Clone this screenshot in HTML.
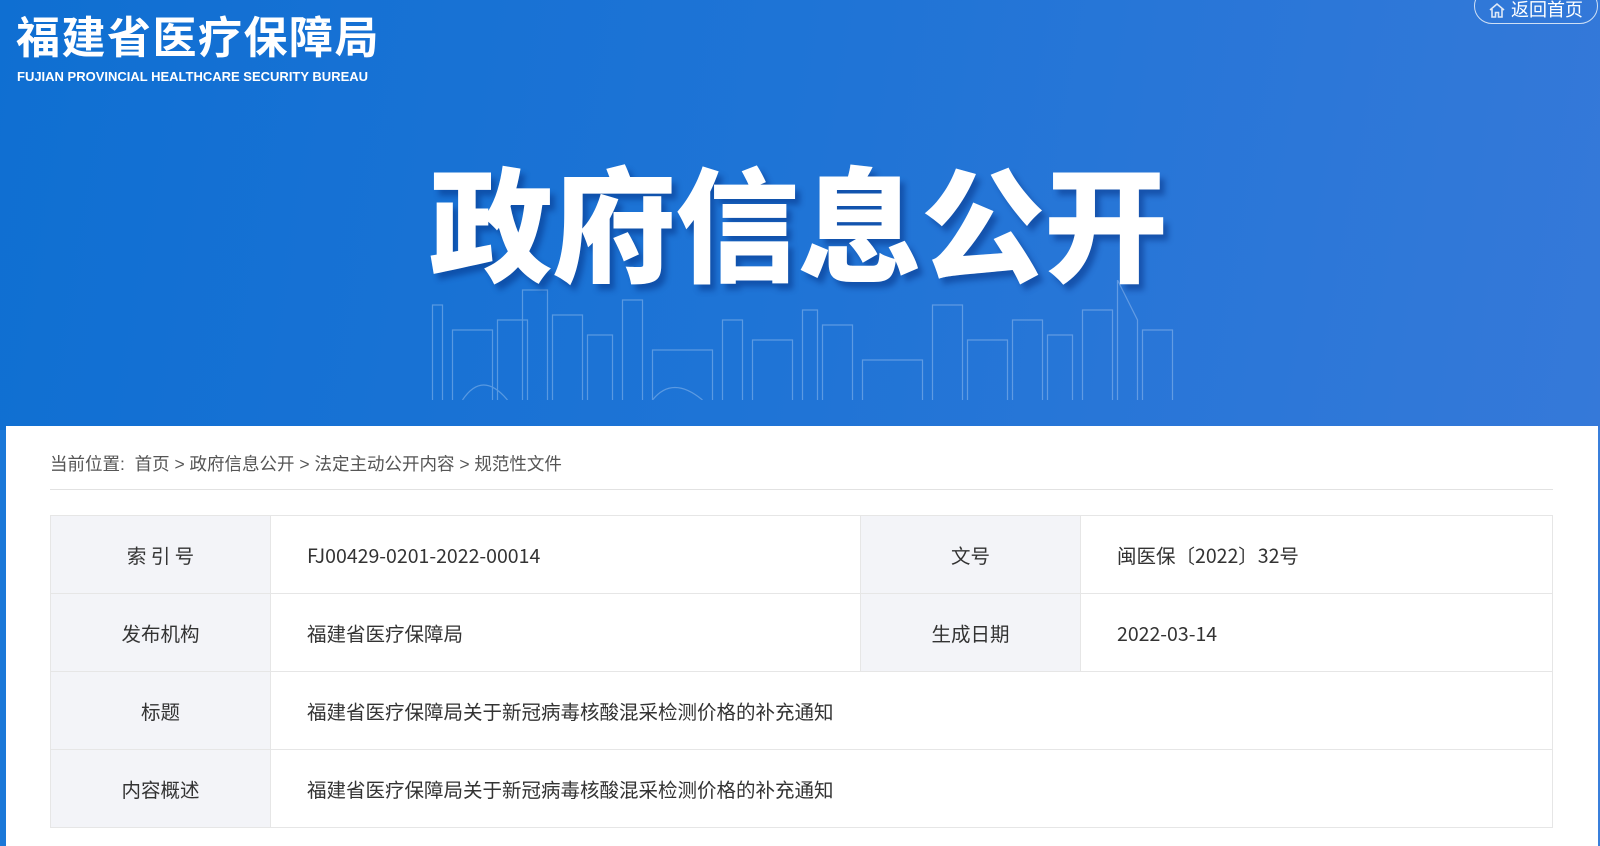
<!DOCTYPE html>
<html><head><meta charset="utf-8"><style>
*{margin:0;padding:0;box-sizing:border-box}
body{width:1600px;height:827px;overflow:hidden;font-family:"Liberation Sans","Noto Sans CJK SC",sans-serif;background:linear-gradient(90deg,#1b78d8,#3a7fdb);position:relative}
.hdr{position:absolute;left:0;top:0;width:1600px;height:430px;background:linear-gradient(100deg,#0f6fd2 0%,#1f74d6 50%,#3579d9 100%)}
.logo{position:absolute;left:16px;top:2px;color:#fff;font-size:44px;font-weight:bold;letter-spacing:1.5px;white-space:nowrap}
.en{position:absolute;left:17px;top:69px;color:#fff;font-size:13px;font-weight:bold;white-space:nowrap}
.home{position:absolute;left:1474px;top:-12px;width:124px;height:36px;border:1.5px solid #cfe0f5;border-radius:18px;color:#fff;font-size:18px;padding:11px 0 0 36px;line-height:20px;white-space:nowrap}
.home svg{position:absolute;left:13px;top:13px}
.title{position:absolute;left:429px;top:128px;color:#fff;font-size:124px;font-weight:900;letter-spacing:-1px;white-space:nowrap;text-shadow:5px 6px 6px rgba(0,40,120,.45);font-family:"Noto Sans CJK SC",sans-serif}
.city{position:absolute;left:415px;top:280px;width:780px;height:120px;opacity:.3}
.panel{position:absolute;left:6px;top:426px;width:1592px;height:420px;background:#fff}
.bc{position:absolute;left:44px;top:25px;font-size:17.5px;color:#555}
.line{position:absolute;left:44px;top:63px;width:1503px;height:1px;background:#e2e2e2}
table{position:absolute;left:44px;top:89px;width:1503px;border-collapse:collapse}
td{border:1px solid #e6e6e6;height:78px;font-size:19.5px;color:#333;font-family:"Noto Sans CJK SC",sans-serif}
td.k{background:#f3f4f8;text-align:center;width:220px}
td.v{padding-left:36px}
</style></head><body>
<div class="hdr">
<div class="logo">福建省医疗保障局</div>
<div class="en">FUJIAN PROVINCIAL HEALTHCARE SECURITY BUREAU</div>
<div class="home"><svg width="18" height="17" viewBox="0 0 18 17"><path d="M2 8 L9 2 L16 8 M4 7 V15 H7.5 V10.5 H10.5 V15 H14 V7" fill="none" stroke="#dfe9f7" stroke-width="1.6"/></svg>返回首页</div>
<svg class="city" viewBox="0 0 765 120"><g fill="none" stroke="#e8f2ff" stroke-width="1.2">
<path d="M10 120V25h10v95M30 120V50h40v70M75 120V40h30v80M100 120V10h25v110M130 120V35h30v85M165 120V55h25v65M200 120V20h20v100M230 120V70h60v50M300 120V40h20v80M330 120V60h40v60M380 120V30h15v90M400 120V45h30v75M440 120V80h60v40M510 120V25h30v95M545 120V60h40v60M590 120V40h30v80M625 120V55h25v65M660 120V30h30v90M695 120V0l20 40v80M720 120V50h30v70"/>
<path d="M40 120 Q60 90 85 120 M230 120 Q250 95 280 120"/>
</g></svg>
<div class="title">政府信息公开</div>
</div>
<div class="panel">
<div class="bc">当前位置:&nbsp; 首页 &gt; 政府信息公开 &gt; 法定主动公开内容 &gt; 规范性文件</div>
<div class="line"></div>
<table>
<tr><td class="k">索 引 号</td><td class="v" style="width:590px">FJ00429-0201-2022-00014</td><td class="k">文号</td><td class="v">闽医保〔2022〕32号</td></tr>
<tr><td class="k">发布机构</td><td class="v">福建省医疗保障局</td><td class="k">生成日期</td><td class="v">2022-03-14</td></tr>
<tr><td class="k">标题</td><td class="v" colspan="3">福建省医疗保障局关于新冠病毒核酸混采检测价格的补充通知</td></tr>
<tr><td class="k">内容概述</td><td class="v" colspan="3">福建省医疗保障局关于新冠病毒核酸混采检测价格的补充通知</td></tr>
</table>
</div>
</body></html>
